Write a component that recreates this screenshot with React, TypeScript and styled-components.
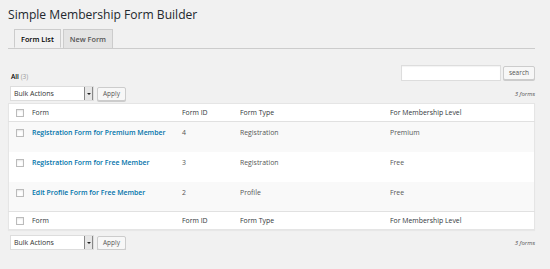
import React from 'react'
import styled, { createGlobalStyle } from 'styled-components'

const Global = createGlobalStyle`
  html, body { margin: 0; padding: 0; background: #f1f1f1; }
  body { font-family: "Open Sans", "Noto Sans", sans-serif; color: #444; }
`

const Wrap = styled.div`
  padding: 0 15px 0 8px;
`
const Title = styled.h1`
  margin: 0; padding-top: 6px; height: 23px;
  font-size: 12.1px; font-weight: 400; line-height: 18px; color: #23282d;
`
const Tabs = styled.nav`
  display: flex; gap: 2px; padding-left: 6px;
  border-bottom: 1px solid #ccc; height: 19px;
`
const Tab = styled.div<{ $active?: boolean }>`
  height: 19px; box-sizing: border-box; padding: 0 6px;
  border: 1px solid #ccc; border-bottom: ${p => (p.$active ? '1px solid #f1f1f1' : 'none')};
  background: ${p => (p.$active ? '#f1f1f1' : '#e4e4e4')};
  color: ${p => (p.$active ? '#000' : '#555')};
  font-size: 7.3px; font-weight: 600; line-height: 18px;
`
const TopBar = styled.div`
  display: flex; justify-content: space-between; align-items: flex-end;
  margin-top: 18px; height: 14px;
`
const Filter = styled.div`
  font-size: 6.5px; color: #666; padding-left: 3px; line-height: 8px;
  b { color: #000; font-weight: 600; }
  span { color: #999; }
`
const SearchBox = styled.div`display: flex; gap: 2px; align-items: center;`
const SearchInput = styled.div`
  width: 98px; height: 14px; background: #fff; border: 1px solid #ddd;
  box-shadow: inset 0 1px 1px rgba(0,0,0,.05);
`
const Button = styled.div`
  height: 14px; box-sizing: border-box; padding: 0 5px; border: 1px solid #ccc;
  background: #f7f7f7; color: #555; border-radius: 2px;
  font-size: 6.5px; line-height: 12px; box-shadow: 0 1px 0 #ccc;
  display: flex; align-items: center;
`
const NavBar = styled.div<{ $top?: boolean }>`
  display: flex; justify-content: space-between; align-items: center;
  padding-left: 2px; height: 15px;
  margin: ${p => (p.$top ? '5px 0 2px' : '5px 0 0')};
`
const Actions = styled.div`display: flex; gap: 3px; align-items: center;`
const Select = styled.div`
  width: 84px; height: 15px; box-sizing: border-box; background: #fff;
  border: 1px solid #ddd; display: flex; align-items: center; justify-content: space-between;
  font-size: 7px; color: #333; padding-left: 3px;
`
const Arrow = styled.div`
  width: 9px; height: 13px; box-sizing: border-box; background: #e6e6e6;
  border-left: 1px solid #888; border-right: 1px solid #888;
  display: flex; align-items: center; justify-content: center;
  &::after {
    content: ''; border-left: 2px solid transparent; border-right: 2px solid transparent;
    border-top: 2px solid #222;
  }
`
const Count = styled.div`
  font-size: 6px; font-style: italic; color: #555;
`
const Table = styled.table`
  width: 100%; border-collapse: collapse; background: #fff;
  border: 1px solid #e5e5e5; box-shadow: 0 1px 1px rgba(0,0,0,.04);
  font-size: 6.9px;
`
const HeadRow = styled.tr<{ $foot?: boolean }>`
  height: 18px;
  border-${p => (p.$foot ? 'top' : 'bottom')}: 1px solid #e1e1e1;
`
const Th = styled.th<{ $w?: number }>`
  text-align: left; font-weight: 400; color: #32373c; padding: 0;
  width: ${p => (p.$w ? `${p.$w}px` : 'auto')};
  vertical-align: middle;
`
const Row = styled.tr<{ $alt?: boolean }>`
  height: 30px; background: ${p => (p.$alt ? '#f9f9f9' : '#fff')};
`
const Td = styled.td`
  padding: 6px 0 0; vertical-align: top; color: #555;
`
const CheckCell = styled.td`
  padding: 7px 0 0 7px; vertical-align: top; width: 16px;
`
const CheckHead = styled.th`
  padding: 0 0 0 7px; width: 16px; vertical-align: middle;
`
const Check = styled.div`
  width: 6px; height: 6px; border: 1px solid #bbb; background: #fff;
  box-shadow: inset 0 1px 2px rgba(0,0,0,.1);
`
const Link = styled.a`
  color: #0073aa; font-weight: 600; text-decoration: none;
`

const rows = [
  { name: 'Registration Form for Premium Member', id: 4, type: 'Registration', level: 'Premium' },
  { name: 'Registration Form for Free Member', id: 3, type: 'Registration', level: 'Free' },
  { name: 'Edit Profile Form for Free Member', id: 2, type: 'Profile', level: 'Free' },
]

function Header({ foot }: { foot?: boolean }) {
  return (
    <HeadRow $foot={foot}>
      <CheckHead><Check /></CheckHead>
      <Th $w={150}>Form</Th>
      <Th $w={58}>Form ID</Th>
      <Th $w={150}>Form Type</Th>
      <Th>For Membership Level</Th>
    </HeadRow>
  )
}

function BulkActions() {
  return (
    <Actions>
      <Select>Bulk Actions<Arrow /></Select>
      <Button>Apply</Button>
    </Actions>
  )
}

export default function App() {
  return (
    <>
      <Global />
      <Wrap>
        <Title>Simple Membership Form Builder</Title>
        <Tabs>
          <Tab $active>Form List</Tab>
          <Tab>New Form</Tab>
        </Tabs>
        <TopBar>
          <Filter><b>All</b> <span>(3)</span></Filter>
          <SearchBox>
            <SearchInput />
            <Button>search</Button>
          </SearchBox>
        </TopBar>
        <NavBar $top>
          <BulkActions />
          <Count>3 forms</Count>
        </NavBar>
        <Table>
          <thead><Header /></thead>
          <tbody>
            {rows.map((r, i) => (
              <Row key={r.id} $alt={i % 2 === 0}>
                <CheckCell><Check /></CheckCell>
                <Td><Link href="#">{r.name}</Link></Td>
                <Td>{r.id}</Td>
                <Td>{r.type}</Td>
                <Td>{r.level}</Td>
              </Row>
            ))}
          </tbody>
          <tfoot><Header foot /></tfoot>
        </Table>
        <NavBar>
          <BulkActions />
          <Count>3 forms</Count>
        </NavBar>
      </Wrap>
    </>
  )
}
